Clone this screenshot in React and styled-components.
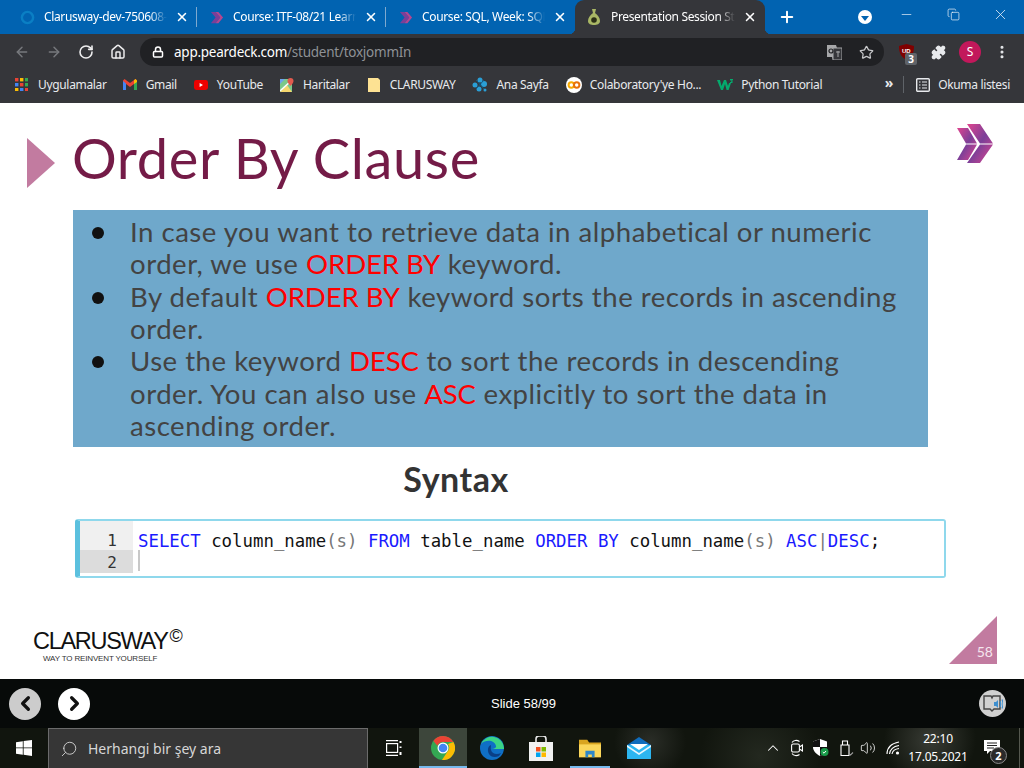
import React from "react";
import styled, { createGlobalStyle } from "styled-components";
import {
  ArrowLeft,
  ArrowRight,
  RotateCw,
  Home,
  Lock,
  Star,
  Plus,
  X,
  Minus,
  Copy,
  ChevronLeft,
  ChevronRight,
  ChevronUp,
  EllipsisVertical,
  Search,
  Puzzle,
  Volume2,
} from "lucide-react";

const Global = createGlobalStyle`
  * { box-sizing: border-box; }
  html, body { margin: 0; padding: 0; background: #fff; }
  body { width: 1024px; height: 768px; overflow: hidden; font-family: "Noto Sans", sans-serif; }
`;

const Screen = styled.div`
  width: 1024px;
  height: 768px;
  display: flex;
  flex-direction: column;
  overflow: hidden;
`;

/* browser tabs */
const TabBar = styled.div`
  height: 34px;
  background: #0163b1;
  display: flex;
  align-items: stretch;
  padding-left: 8px;
  color: #fff;
`;

const flare = (side) => `
  content: "";
  position: absolute;
  bottom: 0;
  ${side}: -6px;
  width: 6px;
  height: 6px;
  top: auto;
  background: radial-gradient(circle at ${side === "left" ? "0 0" : "100% 0"}, transparent 6px, #35363a 6.5px);
`;

const Tab = styled.div`
  position: relative;
  width: ${(p) => (p.$active ? 190 : 189)}px;
  display: flex;
  align-items: center;
  padding: 0 8px 0 11px;
  background: ${(p) => (p.$active ? "#35363a" : "transparent")};
  border-radius: ${(p) => (p.$active ? "9px 9px 0 0" : "0")};
  &::before {
    ${(p) => (p.$active ? flare("left") : "display: none;")}
  }
  &::after {
    ${(p) =>
      p.$active
        ? flare("right")
        : p.$divider
          ? `content: ""; position: absolute; right: 0; top: 7px; height: 20px; width: 1px; background: #7fa9cf;`
          : "display: none;"}
  }
`;

const TabIcon = styled.span`
  width: 16px;
  height: 16px;
  flex: none;
  display: flex;
  align-items: center;
  justify-content: center;
`;

const TabTitle = styled.span`
  flex: 1;
  margin-left: 9px;
  font-size: 12px;
  line-height: 16px;
  white-space: nowrap;
  overflow: hidden;
  letter-spacing: -0.35px;
  -webkit-mask-image: linear-gradient(to right, #000 86%, transparent 100%);
  mask-image: linear-gradient(to right, #000 86%, transparent 100%);
`;

const TabClose = styled(X)`
  width: 14px;
  height: 14px;
  flex: none;
  stroke-width: 2.6;
  margin-left: 8px;
`;

const NewTab = styled(Plus)`
  width: 18px;
  height: 18px;
  stroke-width: 2.6;
  margin: 8px 0 0 13px;
`;

const WindowControls = styled.div`
  margin-left: auto;
  display: flex;
  align-items: flex-start;
`;

const ProfileDrop = styled.span`
  width: 14px;
  height: 14px;
  margin: 10px 11px 0 0;
  border-radius: 50%;
  background: #fff;
  display: flex;
  align-items: center;
  justify-content: center;
  &::after {
    content: "";
    border-left: 4px solid transparent;
    border-right: 4px solid transparent;
    border-top: 5px solid #0163b1;
    margin-top: 2px;
  }
`;

const WinButton = styled.span`
  width: 47px;
  height: 28px;
  display: flex;
  align-items: center;
  justify-content: center;
  color: #eef4fa;
`;

/* address row */
const Toolbar = styled.div`
  height: 36px;
  background: #35363a;
  display: flex;
  align-items: center;
  padding: 0 12px 0 14px;
  color: #d8d9db;
`;

const NavButton = styled.span`
  width: 16px;
  height: 16px;
  margin-right: 16px;
  flex: none;
  display: flex;
  color: ${(p) => (p.$dim ? "#77797d" : "#eeeeef")};
`;

const UrlPill = styled.div`
  width: 744px;
  height: 28px;
  margin-left: -2px;
  border-radius: 14px;
  background: #202124;
  display: flex;
  align-items: center;
  padding: 0 10px 0 12px;
  flex: none;
`;

const Url = styled.div`
  margin-left: 10px;
  font-size: 13.5px;
  letter-spacing: -0.25px;
  color: #fff;
  flex: 1;
  white-space: nowrap;
  span { color: #8e9196; }
`;

const Extensions = styled.div`
  margin-left: 13px;
  display: flex;
  align-items: center;
  gap: 14px;
`;

const UblockBadge = styled.span`
  position: absolute;
  left: 8px;
  top: 10px;
  width: 12px;
  height: 12px;
  background: #5f6368;
  border-radius: 2px;
  color: #fff;
  font-size: 10px;
  font-weight: 700;
  line-height: 12px;
  text-align: center;
`;

const ExtSlot = styled.span`
  position: relative;
  width: 18px;
  height: 18px;
  display: flex;
  align-items: center;
  justify-content: center;
`;

const Avatar = styled.span`
  width: 22px;
  height: 22px;
  margin: 0 -2px;
  border-radius: 50%;
  background: #c2185b;
  color: #fff;
  font-size: 12px;
  line-height: 22px;
  text-align: center;
`;

/* bookmarks */
const Bookmarks = styled.div`
  height: 33px;
  background: #35363a;
  display: flex;
  align-items: center;
  padding: 0 14px 4px 15px;
  color: #e8eaed;
  font-size: 12px;
  letter-spacing: -0.33px;
`;

const Bookmark = styled.div`
  display: flex;
  align-items: center;
  gap: ${(p) => p.$gap || 9}px;
  margin-right: ${(p) => p.$after ?? 17}px;
  white-space: nowrap;
`;

const BookmarkEnd = styled.div`
  margin-left: auto;
  display: flex;
  align-items: center;
`;

const MoreMarks = styled.span`
  font-size: 14px;
  line-height: 14px;
  font-weight: 700;
  margin: 0 10px 3px 0;
`;

const BarLine = styled.span`
  width: 1px;
  height: 17px;
  background: #5f6368;
  margin-right: 12px;
`;

/* slide */
const Slide = styled.main`
  height: 576px;
  background: #fff;
  display: flex;
  flex-direction: column;
  padding-top: 21px;
`;

const TitleRow = styled.header`
  height: 66px;
  display: flex;
  align-items: flex-start;
  padding: 0 31px 0 27px;
`;

const TitleMark = styled.span`
  width: 0;
  height: 0;
  margin-top: 14px;
  border-left: 28px solid #c27ba0;
  border-top: 25px solid transparent;
  border-bottom: 25px solid transparent;
  flex: none;
`;

const Title = styled.h1`
  margin: 0 0 0 17px;
  font: 400 56px/68px "Lato", sans-serif;
  letter-spacing: 0.6px;
  color: #741b47;
  white-space: nowrap;
`;

const BrandMark = styled.svg`
  margin-left: auto;
  width: 36px;
  height: 40px;
  flex: none;
`;

const NoteBox = styled.ul`
  margin: 20px 0 0 73px;
  width: 855px;
  height: 237px;
  background: #6fa8cb;
  list-style: none;
  padding: 6px 20px 0 57px;
  font: 400 27.6px/32.35px "Lato", sans-serif;
  letter-spacing: 0.5px;
  color: #434343;
`;

const NoteItem = styled.li`
  position: relative;
  &::before {
    content: "";
    position: absolute;
    left: -38px;
    top: 11px;
    width: 12px;
    height: 12px;
    border-radius: 50%;
    background: #111;
  }
`;

const Key = styled.span`
  color: #ff0000;
  letter-spacing: -0.1px;
`;

const Subhead = styled.h2`
  margin: 13px 0 0;
  width: 912px;
  text-align: center;
  font: 700 34px/38px "Lato", sans-serif;
  letter-spacing: 0.5px;
  color: #333;
`;

const CodeBox = styled.div`
  margin: 21px 0 0 75px;
  width: 871px;
  height: 59px;
  border: 2px solid #8fd8ec;
  border-left: 5px solid #5bc0de;
  border-radius: 3px;
  display: grid;
  grid-template-columns: 53px 1fr;
  grid-template-rows: 29px 23px;
  align-content: start;
  font: 400 17.36px/23px "DejaVu Sans Mono", monospace;
  color: #111;
`;

const Gutter = styled.span`
  background: ${(p) => (p.$current ? "#dcdcdc" : "#f0f0f0")};
  color: #333;
  text-align: right;
  padding: ${(p) => (p.$current ? 1 : 8)}px 16px 0 0;
  font-size: 16px;
`;

const CodeLine = styled.span`
  padding: ${(p) => (p.$first ? 9 : 0)}px 0 0 5px;
  white-space: pre;
`;

const Caret = styled.span`
  display: block;
  width: 2px;
  height: 21px;
  background: #c8c8c8;
`;

const Kw = styled.span`
  color: #1a1aff;
`;

const Paren = styled.span`
  color: #777;
`;

const SlideFoot = styled.footer`
  margin-top: auto;
  height: 63px;
  display: flex;
  align-items: flex-end;
  padding: 0 27px 16px 33px;
`;

const Wordmark = styled.div`
  color: #111;
  font: 400 23.5px/25px "Liberation Sans", sans-serif;
  letter-spacing: -1.3px;
  sup { font-size: 18px; line-height: 0; vertical-align: 7px; letter-spacing: 0; margin-left: 2px; }
`;

const Tagline = styled.div`
  font: 400 8px/9px "Liberation Sans", sans-serif;
  margin-left: 10px;
  color: #333;
  letter-spacing: -0.15px;
`;

const PageCorner = styled.div`
  margin-left: auto;
  margin-bottom: -1px;
  width: 48px;
  height: 48px;
  background: #c27ba0;
  clip-path: polygon(100% 0, 100% 100%, 0 100%);
  color: #f5e6ee;
  font: 400 14px/20px "Lato", sans-serif;
  display: flex;
  align-items: flex-end;
  justify-content: flex-end;
  padding: 0 4px 2px 0;
`;

/* pear deck bar */
const DeckBar = styled.div`
  height: 49px;
  background: #070a09;
  display: flex;
  align-items: center;
  padding: 0 18px 0 9px;
  color: #fff;
`;

const DeckButton = styled.span`
  width: 32px;
  height: 32px;
  border-radius: 50%;
  margin-right: 17px;
  background: ${(p) => (p.$dim ? "#cccccc" : "#fff")};
  color: #111;
  display: flex;
  align-items: center;
  justify-content: center;
`;

const SlideCount = styled.div`
  margin-left: 384px;
  font: 400 13px/16px "Liberation Sans", sans-serif;
  width: 66px;
  white-space: nowrap;
`;

const ReaderButton = styled.span`
  margin-left: auto;
  width: 27px;
  height: 27px;
  border-radius: 50%;
  background: #d0d0d0;
  display: flex;
  align-items: center;
  justify-content: center;
`;

/* windows taskbar */
const Taskbar = styled.div`
  height: 40px;
  display: flex;
  align-items: stretch;
  color: #fff;
  background:
    radial-gradient(circle at 650px 14px, #2a2d27 0, transparent 36px),
    radial-gradient(circle at 930px 12px, #383b34 0, transparent 46px),
    radial-gradient(circle at 760px 28px, #23281f 0, transparent 60px),
    #11150e;
`;

const StartButton = styled.span`
  width: 48px;
  display: flex;
  align-items: center;
  justify-content: center;
`;

const SearchBox = styled.div`
  width: 320px;
  background: #363636;
  border: 1px solid #6b6b6b;
  border-bottom: 0;
  display: flex;
  align-items: center;
  padding-left: 11px;
  gap: 10px;
  color: #d6d6d6;
  font-size: 14px;
`;

const TaskSlot = styled.span`
  position: relative;
  width: ${(p) => p.$w || 49}px;
  display: flex;
  align-items: center;
  justify-content: center;
  background: ${(p) => (p.$active ? "#3d463b" : "transparent")};
  &::after {
    content: "";
    display: ${(p) => (p.$open ? "block" : "none")};
    position: absolute;
    bottom: 0;
    left: ${(p) => (p.$active ? 0 : 5)}px;
    right: ${(p) => (p.$active ? 0 : 4)}px;
    height: 2px;
    background: #76b9ed;
  }
`;

const Tray = styled.div`
  margin-left: auto;
  display: flex;
  align-items: center;
  padding-right: 4px;
`;

const TrayIcon = styled.span`
  width: ${(p) => p.$w}px;
  margin-right: ${(p) => p.$after || 0}px;
  display: flex;
  align-items: center;
  justify-content: center;
  position: relative;
  flex: none;
`;

const Clock = styled.div`
  width: 70px;
  margin: 0 4px 0 3px;
  text-align: center;
  font-size: 12px;
  line-height: 18px;
  letter-spacing: -0.2px;
  white-space: nowrap;
`;

const NoticeSlot = styled.span`
  position: relative;
  width: 30px;
  height: 100%;
  display: flex;
  align-items: center;
  justify-content: center;
  margin-right: 12px;
`;

const NoticeCount = styled.span`
  position: absolute;
  right: 0;
  top: 19px;
  width: 17px;
  height: 17px;
  border-radius: 50%;
  background: #2a2a2a;
  border: 1px solid #8a8a8a;
  font-size: 11px;
  font-weight: 700;
  line-height: 15px;
  text-align: center;
`;

const DesktopEdge = styled.span`
  width: 1px;
  height: 100%;
  background: #55584f;
`;

const PearDeckIcon = () => (
  <svg width="15" height="15" viewBox="0 0 16 16">
    <path d="M2 2h5l5 6-5 6H2l5-6z" fill="#7b3f98" />
    <path d="M7 2h3l5 6-5 6H7l5-6z" fill="#b5468f" />
  </svg>
);

const RingIcon = () => (
  <svg width="15" height="15" viewBox="0 0 16 16">
    <circle cx="8" cy="8" r="6" fill="none" stroke="#0a7fc4" strokeWidth="2.6" />
  </svg>
);

const PearIcon = () => (
  <svg width="16" height="18" viewBox="0 0 16 18">
    <path d="M6 1h4l-1 4c3 2 5 5 5 8 0 3-3 4-6 4s-6-1-6-4c0-3 2-6 5-8z" fill="#a9b765" />
    <circle cx="8" cy="12" r="2.800" fill="#2c3016" />
  </svg>
);

const AppsIcon = () => {
  const colors = ["#ea4335", "#fbbc04", "#34a853", "#4285f4", "#ea4335", "#34a853", "#fbbc04", "#4285f4", "#ea4335"];
  return (
    <svg width="13" height="13" viewBox="0 0 13 13">
      {colors.map((c, i) => (
        <rect key={i} x={(i % 3) * 5} y={Math.floor(i / 3) * 5} width="3.4" height="3.4" fill={c} />
      ))}
    </svg>
  );
};

const GmailIcon = () => (
  <svg width="14" height="11" viewBox="0 0 14 11">
    <path d="M0 1.500V11h3V5l4 3 4-3v6h3V1.500L12.500 0 7 4 1.500 0z" fill="#ea4335" />
    <path d="M0 2v9h3V4.500z" fill="#4285f4" />
    <path d="M14 2v9h-3V4.500z" fill="#34a853" />
    <path d="M11 1.200 12.500 0 14 1.500V3l-3 2z" fill="#fbbc04" />
  </svg>
);

const YouTubeIcon = () => (
  <svg width="14" height="10" viewBox="0 0 14 10">
    <rect width="14" height="10" rx="2.400" fill="#ee0000" />
    <path d="M5.600 3v4L9 5z" fill="#fff" />
  </svg>
);

const MapsIcon = () => (
  <svg width="14" height="14" viewBox="0 0 14 14">
    <path d="M0 1h12v13H0z" fill="#7cc88a" />
    <path d="M0 14 7 7l5 7z" fill="#f5d76e" />
    <path d="M0 1h5L0 6z" fill="#6ea3ee" />
    <path d="M0 13 12 2" stroke="#fff" strokeWidth="1.600" />
    <path d="M10.500 0a3 3 0 0 1 3 3c0 2-3 5-3 5s-3-3-3-5a3 3 0 0 1 3-3z" fill="#e05a4e" />
  </svg>
);

const NoteFolder = () => (
  <svg width="12" height="14" viewBox="0 0 12 14">
    <path d="M0 0h10l2 2v12H0z" fill="#fde293" />
  </svg>
);

const BlueNet = () => (
  <svg width="16" height="15" viewBox="0 0 16 15">
    <g fill="#2a9fd6">
      <circle cx="8" cy="3" r="2.500" />
      <circle cx="3" cy="8" r="2.500" />
      <circle cx="12" cy="7" r="3" />
      <circle cx="7" cy="12" r="2.500" />
      <circle cx="13" cy="13" r="1.500" />
    </g>
    <path d="M4 3 12 12M12 3 4 12" stroke="#0e5a86" strokeWidth="1" />
  </svg>
);

const ColabIcon = () => (
  <svg width="16" height="16" viewBox="0 0 16 16">
    <circle cx="8" cy="8" r="8" fill="#fff" />
    <circle cx="5.300" cy="8" r="2.700" fill="none" stroke="#f9ab00" strokeWidth="2" />
    <circle cx="10.700" cy="8" r="2.700" fill="none" stroke="#e8710a" strokeWidth="2" />
  </svg>
);

const W3Icon = () => (
  <svg width="16" height="12" viewBox="0 0 16 12">
    <path d="M0 1h3l1.500 6L7 1h2l2 6 1-3h2l-2.400 7h-2L8 5l-2 6H4z" fill="#04aa6d" />
    <path d="M13 0h3v1l-1 1 1 1-1 1h-2v-1h1.500l-.5-.6.5-.9H13z" fill="#04aa6d" />
  </svg>
);

const ReadingIcon = () => (
  <svg width="14" height="14" viewBox="0 0 14 14" fill="none" stroke="#e8eaed">
    <rect x="0.700" y="0.700" width="12.600" height="12.600" rx="1" strokeWidth="1.400" />
    <path d="M3 4h1.500M6 4h5M3 7h1.500M6 7h5M3 10h1.500M6 10h5" strokeWidth="1.200" />
  </svg>
);

const TranslateIcon = () => (
  <svg width="15" height="15" viewBox="0 0 15 15">
    <path d="M0 0h9l1 3h5v12H6l-1-3H0z" fill="#a6a7a9" />
    <path d="M6 3h9v12H6z" fill="#35363a" stroke="#a6a7a9" />
    <circle cx="4" cy="6" r="2" fill="none" stroke="#202124" strokeWidth="1.200" />
    <path d="M9 7h4M11 6v6" stroke="#a6a7a9" />
  </svg>
);

const UblockIcon = () => (
  <svg width="15" height="16" viewBox="0 0 15 16">
    <path d="M7.500 0 15 2c0 7-2 11-7.500 14C2 13 0 9 0 2z" fill="#800000" />
    <text x="3" y="9" fontSize="6" fontWeight="700" fill="#fff" fontFamily="Liberation Sans">UD</text>
  </svg>
);

const ChromeLogo = () => (
  <svg width="24" height="24" viewBox="0 0 24 24">
    <circle cx="12" cy="12" r="12" fill="#34a853" />
    <path d="M12 0a12 12 0 0 1 10.400 6H12a6 6 0 0 0-5.600 3.800L2.400 5A12 12 0 0 1 12 0z" fill="#ea4335" />
    <path d="M22.400 6A12 12 0 0 1 11 24l5.200-8A6 6 0 0 0 17 8z" fill="#fbbc04" />
    <circle cx="12" cy="12" r="5.500" fill="#fff" />
    <circle cx="12" cy="12" r="4.300" fill="#4285f4" />
  </svg>
);

const EdgeLogo = () => (
  <svg width="24" height="24" viewBox="0 0 24 24">
    <circle cx="12" cy="12" r="12" fill="#0f6fc6" />
    <path d="M24 12a12 12 0 0 0-23-4c4-4 13-5 15 2 .6 2-2 3-4 3h12z" fill="#3bd486" />
    <path d="M11 9c-3 1-4 5-2 9 1.500 3 6 4 10 2l2-3c-4 2-9 1-10-3-.5-2 0-4 0-5z" fill="#0a3f86" />
  </svg>
);

const StoreLogo = () => (
  <svg width="24" height="25" viewBox="0 0 24 25">
    <path d="M7 6V3a3 3 0 0 1 3-3h4a3 3 0 0 1 3 3v3" fill="none" stroke="#e8e8e8" strokeWidth="1.600" />
    <rect y="6" width="24" height="19" fill="#f1f1f1" />
    <rect x="7" y="11" width="4.500" height="4.500" fill="#f25022" />
    <rect x="12.500" y="11" width="4.500" height="4.500" fill="#7fba00" />
    <rect x="7" y="16.500" width="4.500" height="4.500" fill="#00a4ef" />
    <rect x="12.500" y="16.500" width="4.500" height="4.500" fill="#ffb900" />
  </svg>
);

const ExplorerLogo = () => (
  <svg width="22" height="19" viewBox="0 0 24 19">
    <path d="M0 0h9l2 3h13v16H0z" fill="#d9a520" />
    <path d="M0 5h24v14H0z" fill="#fbd75b" />
    <path d="M7 12h10v7h-3v-3h-4v3H7z" fill="#2f87c9" />
  </svg>
);

const MailLogo = () => (
  <svg width="24" height="22" viewBox="0 0 24 22">
    <path d="M12 0 24 8v14H0V8z" fill="#0f6cbd" />
    <path d="M0 8h24v14H0z" fill="#2cb5f0" />
    <path d="M0 8l12 8 12-8v2l-12 8L0 10z" fill="#e8f6fd" />
    <path d="M3 7h18l-9 6z" fill="#fff" />
  </svg>
);

const WindowsLogo = () => (
  <svg width="16" height="16" viewBox="0 0 16 16" fill="#fff">
    <path d="M0 2.200 6.800 1.200v6.300H0zM7.600 1.100 16 0v7.500H7.600zM0 8.300h6.800v6.500L0 13.800zM7.600 8.300H16V16l-8.400-1.200z" />
  </svg>
);

const TaskViewIcon = () => (
  <svg width="16" height="16" viewBox="0 0 16 16" fill="none" stroke="#fff" strokeWidth="1.200">
    <path d="M0 .6h12M0 15.400h12" />
    <rect x=".6" y="3.600" width="11" height="8.800" />
    <path d="M14.500 1v2M14.500 6.500v1.500M14.500 12v3" strokeWidth="2" />
  </svg>
);

const ReaderIcon = () => (
  <svg width="20" height="17" viewBox="0 0 20 17" fill="none">
    <path d="M1 1h7l1 2 1-2h7v13h-6l-2 2-2-2H1z" stroke="#444" strokeWidth="1.400" />
    <path d="M11 7h2l2-2v8l-2-2h-2z" fill="#3d8fd0" />
    <path d="M17 6c1 2 1 4 0 6M19 4.500c1.300 3 1.300 6 0 9" stroke="#3d8fd0" strokeWidth="1.200" />
  </svg>
);

const MeetIcon = () => (
  <svg width="12" height="18" viewBox="0 0 12 18" fill="none" stroke="#fff" strokeWidth="1.100">
    <path d="M1 3.500C2.500 1 6 .8 8.500 2.500M1 14.500c1.500 2.500 5 2.700 7.500 1" />
    <rect x=".6" y="5" width="7.800" height="8" rx="1.500" />
    <path d="M8.500 8 11.500 6v6l-3-2" />
  </svg>
);

const ShieldIcon = () => (
  <svg width="16" height="18" viewBox="0 0 16 18">
    <path d="M7 0 14 2.500V8c0 4-3 7-7 9-4-2-7-5-7-9V2.500z" fill="#fff" />
    <path d="M7 0v8H0V2.500zM14 8c0 4-3 7-7 9V8z" fill="#111" />
    <circle cx="11.500" cy="13" r="4" fill="#1a9c4b" />
    <path d="M9.800 13l1.200 1.200 2-2.200" stroke="#fff" fill="none" strokeWidth="1" />
  </svg>
);

const UsbIcon = () => (
  <svg width="14" height="16" viewBox="0 0 14 16" fill="none" stroke="#fff" strokeWidth="1.100">
    <path d="M2.500 5V1h5v4M1 5h8v10.500H1z" />
    <path d="M9 14l1.500 1L13 12.500" stroke="#999" />
  </svg>
);

const WifiIcon = () => (
  <svg width="14" height="14" viewBox="0 0 14 14" fill="none" stroke="#fff" strokeWidth="1.100">
    <path d="M1 13C1 7 5 2.500 13 1M3.500 13C4 9 7 5.500 13 4.500M6 13c.5-2.500 2.500-5 7-5.500" />
    <circle cx="11.500" cy="12" r="1.600" fill="#fff" stroke="none" />
  </svg>
);

const NoticeIcon = () => (
  <svg width="16" height="16" viewBox="0 0 16 16">
    <path d="M0 0h16v11H6l-3 3v-3H0z" fill="#fff" />
    <path d="M3 3h10M3 5.500h10M3 8h7" stroke="#222" strokeWidth="1" />
  </svg>
);

const tabs = [
  { title: "Clarusway-dev-750608-", icon: <RingIcon />, divider: true },
  { title: "Course: ITF-08/21 Learning", icon: <PearDeckIcon />, divider: true },
  { title: "Course: SQL, Week: SQL", icon: <PearDeckIcon /> },
  { title: "Presentation Session Student", icon: <PearIcon />, active: true },
];

const marks = [
  { label: "Uygulamalar", icon: <AppsIcon />, gap: 10, after: 16 },
  { label: "Gmail", icon: <GmailIcon /> },
  { label: "YouTube", icon: <YouTubeIcon /> },
  { label: "Haritalar", icon: <MapsIcon />, after: 18 },
  { label: "CLARUSWAY", icon: <NoteFolder />, gap: 10 },
  { label: "Ana Sayfa", icon: <BlueNet />, gap: 8 },
  { label: "Colaboratory'ye Ho...", icon: <ColabIcon />, gap: 8, after: 16 },
  { label: "Python Tutorial", icon: <W3Icon />, gap: 8 },
];

export default function App() {
  return (
    <Screen>
      <Global />
      <TabBar>
        {tabs.map((t) => (
          <Tab key={t.title} $active={t.active} $divider={t.divider}>
            <TabIcon>{t.icon}</TabIcon>
            <TabTitle>{t.title}</TabTitle>
            <TabClose />
          </Tab>
        ))}
        <NewTab />
        <WindowControls>
          <ProfileDrop />
          <WinButton>
            <Minus size={15} strokeWidth={1.1} />
          </WinButton>
          <WinButton>
            <Copy size={13} strokeWidth={1.3} />
          </WinButton>
          <WinButton>
            <X size={17} strokeWidth={1.1} />
          </WinButton>
        </WindowControls>
      </TabBar>

      <Toolbar>
        <NavButton $dim><ArrowLeft size={16} strokeWidth={2.2} /></NavButton>
        <NavButton $dim><ArrowRight size={16} strokeWidth={2.2} /></NavButton>
        <NavButton><RotateCw size={16} strokeWidth={2.4} /></NavButton>
        <NavButton><Home size={16} strokeWidth={2.2} /></NavButton>
        <UrlPill>
          <Lock size={12} strokeWidth={3} color="#fff" />
          <Url>app.peardeck.com<span>/student/toxjommIn</span></Url>
          <TranslateIcon />
          <Star size={15} strokeWidth={2} color="#c8c9cb" style={{ marginLeft: 17 }} />
        </UrlPill>
        <Extensions>
          <ExtSlot>
            <UblockIcon />
            <UblockBadge>3</UblockBadge>
          </ExtSlot>
          <ExtSlot><Puzzle size={15} fill="#e8eaed" color="#e8eaed" /></ExtSlot>
          <Avatar>S</Avatar>
          <ExtSlot><EllipsisVertical size={16} strokeWidth={2.6} color="#e8eaed" /></ExtSlot>
        </Extensions>
      </Toolbar>

      <Bookmarks>
        {marks.map((m) => (
          <Bookmark key={m.label} $gap={m.gap} $after={m.after}>
            {m.icon}
            {m.label}
          </Bookmark>
        ))}
        <BookmarkEnd>
          <MoreMarks>»</MoreMarks>
          <BarLine />
          <Bookmark $after={0} $gap={8}>
            <ReadingIcon />
            Okuma listesi
          </Bookmark>
        </BookmarkEnd>
      </Bookmarks>

      <Slide>
        <TitleRow>
          <TitleMark />
          <Title>Order By Clause</Title>
          <BrandMark viewBox="0 0 36 40">
            <defs>
              <linearGradient id="brand" x1="0" y1="0" x2="1" y2="1">
                <stop offset="0" stopColor="#e0458f" />
                <stop offset="0.5" stopColor="#7b3f98" />
                <stop offset="1" stopColor="#e0458f" />
              </linearGradient>
            </defs>
            <path d="M0 4h11l9 15.500H9zM9 20.500h11L11 36H0z" fill="url(#brand)" />
            <path d="M10 0h13l13 19.500H23zM23 20.500h13L23 39H10z" fill="url(#brand)" />
          </BrandMark>
        </TitleRow>

        <NoteBox>
          <NoteItem>
            In case you want to retrieve data in alphabetical or numeric order, we use <Key>ORDER BY</Key> keyword.
          </NoteItem>
          <NoteItem>
            By default <Key>ORDER BY</Key> keyword sorts the records in ascending order.
          </NoteItem>
          <NoteItem>
            Use the keyword <Key>DESC</Key> to sort the records in descending order. You can also use <Key>ASC</Key> explicitly to sort the data in ascending order.
          </NoteItem>
        </NoteBox>

        <Subhead>Syntax</Subhead>

        <CodeBox>
          <Gutter>1</Gutter>
          <CodeLine $first>
            <Kw>SELECT</Kw> column_name<Paren>(s)</Paren> <Kw>FROM</Kw> table_name <Kw>ORDER BY</Kw> column_name<Paren>(s)</Paren> <Kw>ASC</Kw><Paren>|</Paren><Kw>DESC</Kw>;
          </CodeLine>
          <Gutter $current>2</Gutter>
          <CodeLine><Caret /></CodeLine>
        </CodeBox>

        <SlideFoot>
          <div>
            <Wordmark>CLARUSWAY<sup>©</sup></Wordmark>
            <Tagline>WAY TO REINVENT YOURSELF</Tagline>
          </div>
          <PageCorner>58</PageCorner>
        </SlideFoot>
      </Slide>

      <DeckBar>
        <DeckButton $dim><ChevronLeft size={23} strokeWidth={3.4} /></DeckButton>
        <DeckButton><ChevronRight size={23} strokeWidth={3.4} /></DeckButton>
        <SlideCount>Slide 58/99</SlideCount>
        <ReaderButton><ReaderIcon /></ReaderButton>
      </DeckBar>

      <Taskbar>
        <StartButton><WindowsLogo /></StartButton>
        <SearchBox>
          <Search size={18} strokeWidth={1.2} style={{ transform: "scaleX(-1)" }} />
          Herhangi bir şey ara
        </SearchBox>
        <TaskSlot $w={51}><TaskViewIcon /></TaskSlot>
        <TaskSlot $w={48} $active $open><ChromeLogo /></TaskSlot>
        <TaskSlot><EdgeLogo /></TaskSlot>
        <TaskSlot><StoreLogo /></TaskSlot>
        <TaskSlot $open><ExplorerLogo /></TaskSlot>
        <TaskSlot><MailLogo /></TaskSlot>
        <Tray>
          <TrayIcon $w={18} $after={9}><ChevronUp size={18} strokeWidth={1.4} /></TrayIcon>
          <TrayIcon $w={12} $after={10}><MeetIcon /></TrayIcon>
          <TrayIcon $w={16} $after={11}><ShieldIcon /></TrayIcon>
          <TrayIcon $w={14} $after={6}><UsbIcon /></TrayIcon>
          <TrayIcon $w={16} $after={10}><Volume2 size={16} strokeWidth={1.2} /></TrayIcon>
          <TrayIcon $w={14}><WifiIcon /></TrayIcon>
          <Clock>22:10<br />17.05.2021</Clock>
          <NoticeSlot>
            <NoticeIcon />
            <NoticeCount>2</NoticeCount>
          </NoticeSlot>
          <DesktopEdge />
        </Tray>
      </Taskbar>
    </Screen>
  );
}
